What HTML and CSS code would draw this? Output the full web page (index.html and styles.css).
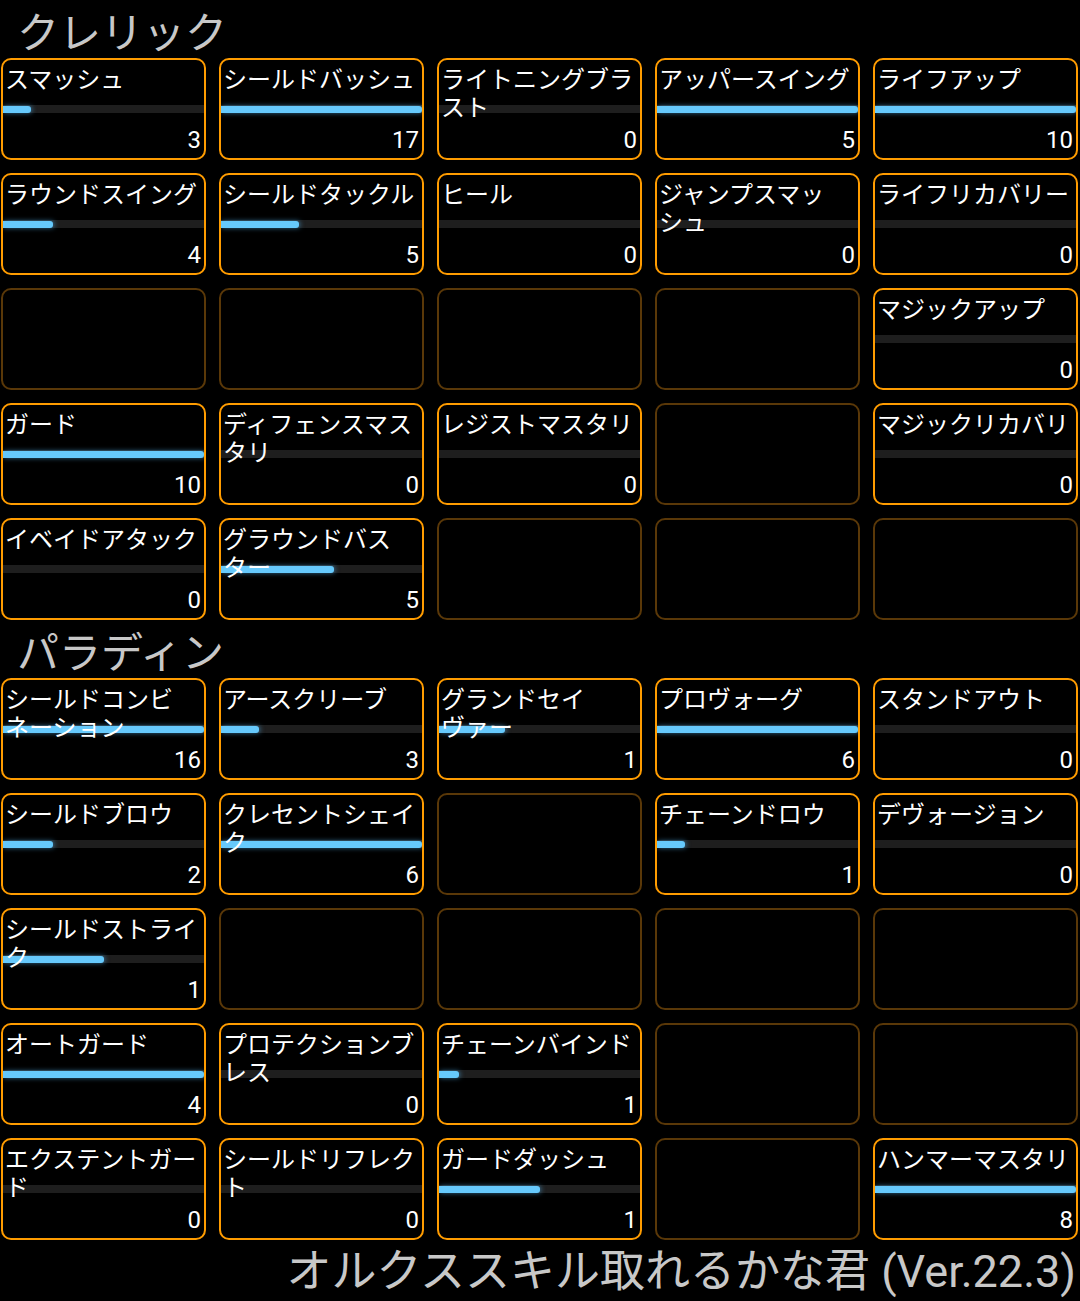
FILE: index.html
```html
<!DOCTYPE html>
<html lang="ja">
<head>
    <meta charset="UTF-8">
    <meta name="viewport" content="width=device-width, initial-scale=1.0">
    <title>オルクススキル取れるかな君</title>
    <link rel="stylesheet" href="styles.css">
</head>
<body>
  <div class="screen">

    <div class="class-title">クレリック</div>
    <div class="skill-grid">
      <div class="skill"><div class="bar"><div class="fill" style="width:14%"></div></div><div class="skill-name">スマッシュ</div><div class="skill-lv">3</div></div>
      <div class="skill"><div class="bar"><div class="fill" style="width:100%"></div></div><div class="skill-name">シールドバッシュ</div><div class="skill-lv">17</div></div>
      <div class="skill"><div class="bar"></div><div class="skill-name">ライトニングブラスト</div><div class="skill-lv">0</div></div>
      <div class="skill"><div class="bar"><div class="fill" style="width:100%"></div></div><div class="skill-name">アッパースイング</div><div class="skill-lv">5</div></div>
      <div class="skill"><div class="bar"><div class="fill" style="width:100%"></div></div><div class="skill-name">ライフアップ</div><div class="skill-lv">10</div></div>

      <div class="skill"><div class="bar"><div class="fill" style="width:25%"></div></div><div class="skill-name">ラウンドスイング</div><div class="skill-lv">4</div></div>
      <div class="skill"><div class="bar"><div class="fill" style="width:39%"></div></div><div class="skill-name">シールドタックル</div><div class="skill-lv">5</div></div>
      <div class="skill"><div class="bar"></div><div class="skill-name">ヒール</div><div class="skill-lv">0</div></div>
      <div class="skill"><div class="bar"></div><div class="skill-name">ジャンプスマッシュ</div><div class="skill-lv">0</div></div>
      <div class="skill"><div class="bar"></div><div class="skill-name">ライフリカバリー</div><div class="skill-lv">0</div></div>

      <div class="skill empty"></div>
      <div class="skill empty"></div>
      <div class="skill empty"></div>
      <div class="skill empty"></div>
      <div class="skill"><div class="bar"></div><div class="skill-name">マジックアップ</div><div class="skill-lv">0</div></div>

      <div class="skill"><div class="bar"><div class="fill" style="width:100%"></div></div><div class="skill-name">ガード</div><div class="skill-lv">10</div></div>
      <div class="skill"><div class="bar"></div><div class="skill-name">ディフェンスマスタリ</div><div class="skill-lv">0</div></div>
      <div class="skill"><div class="bar"></div><div class="skill-name">レジストマスタリ</div><div class="skill-lv">0</div></div>
      <div class="skill empty"></div>
      <div class="skill"><div class="bar"></div><div class="skill-name">マジックリカバリ</div><div class="skill-lv">0</div></div>

      <div class="skill"><div class="bar"></div><div class="skill-name">イベイドアタック</div><div class="skill-lv">0</div></div>
      <div class="skill"><div class="bar"><div class="fill" style="width:56%"></div></div><div class="skill-name">グラウンドバスター</div><div class="skill-lv">5</div></div>
      <div class="skill empty"></div>
      <div class="skill empty"></div>
      <div class="skill empty"></div>
    </div>

    <div class="class-title">パラディン</div>
    <div class="skill-grid">
      <div class="skill"><div class="bar"><div class="fill" style="width:100%"></div></div><div class="skill-name">シールドコンビネーション</div><div class="skill-lv">16</div></div>
      <div class="skill"><div class="bar"><div class="fill" style="width:19%"></div></div><div class="skill-name">アースクリーブ</div><div class="skill-lv">3</div></div>
      <div class="skill"><div class="bar"><div class="fill" style="width:33%"></div></div><div class="skill-name">グランドセイヴァー</div><div class="skill-lv">1</div></div>
      <div class="skill"><div class="bar"><div class="fill" style="width:100%"></div></div><div class="skill-name">プロヴォーグ</div><div class="skill-lv">6</div></div>
      <div class="skill"><div class="bar"></div><div class="skill-name">スタンドアウト</div><div class="skill-lv">0</div></div>

      <div class="skill"><div class="bar"><div class="fill" style="width:25%"></div></div><div class="skill-name">シールドブロウ</div><div class="skill-lv">2</div></div>
      <div class="skill"><div class="bar"><div class="fill" style="width:100%"></div></div><div class="skill-name">クレセントシェイク</div><div class="skill-lv">6</div></div>
      <div class="skill empty"></div>
      <div class="skill"><div class="bar"><div class="fill" style="width:14%"></div></div><div class="skill-name">チェーンドロウ</div><div class="skill-lv">1</div></div>
      <div class="skill"><div class="bar"></div><div class="skill-name">デヴォージョン</div><div class="skill-lv">0</div></div>

      <div class="skill"><div class="bar"><div class="fill" style="width:50%"></div></div><div class="skill-name">シールドストライク</div><div class="skill-lv">1</div></div>
      <div class="skill empty"></div>
      <div class="skill empty"></div>
      <div class="skill empty"></div>
      <div class="skill empty"></div>

      <div class="skill"><div class="bar"><div class="fill" style="width:100%"></div></div><div class="skill-name">オートガード</div><div class="skill-lv">4</div></div>
      <div class="skill"><div class="bar"></div><div class="skill-name">プロテクションブレス</div><div class="skill-lv">0</div></div>
      <div class="skill"><div class="bar"><div class="fill" style="width:10%"></div></div><div class="skill-name">チェーンバインド</div><div class="skill-lv">1</div></div>
      <div class="skill empty"></div>
      <div class="skill empty"></div>

      <div class="skill"><div class="bar"></div><div class="skill-name">エクステントガード</div><div class="skill-lv">0</div></div>
      <div class="skill"><div class="bar"></div><div class="skill-name">シールドリフレクト</div><div class="skill-lv">0</div></div>
      <div class="skill"><div class="bar"><div class="fill" style="width:50%"></div></div><div class="skill-name">ガードダッシュ</div><div class="skill-lv">1</div></div>
      <div class="skill empty"></div>
      <div class="skill"><div class="bar"><div class="fill" style="width:100%"></div></div><div class="skill-name">ハンマーマスタリ</div><div class="skill-lv">8</div></div>
    </div>

    <div class="footer">オルクススキル取れるかな君 (Ver.22.3)</div>
  </div>
</body>
</html>
```

FILE: styles.css
```css
body {
    margin: 0;
    background-color: #000;
    font-family: Roboto, "Noto Sans CJK JP", sans-serif;
}

.screen {
    width: 1080px;
    height: 1301px;
    overflow: hidden;
}

.class-title {
    height: 58px;
    padding-left: 17px;
    line-height: 60px;
    font-size: 42px;
    color: #c8c8c8;
    font-family: "Noto Sans CJK JP", sans-serif;
}

.skill-grid {
    display: grid;
    grid-template-columns: repeat(5, 205px);
    grid-auto-rows: 102px;
    gap: 13px;
    padding-left: 1px;
}

.skill {
    display: grid;
    grid-template-columns: 100%;
    grid-template-rows: 100%;
    border: 2px solid #ff9c00;
    border-radius: 10px;
    overflow: hidden;
    color: #fff;
}
.skill.empty {
    border-color: #5a3808;
}

.skill > * {
    grid-row: 1;
    grid-column: 1;
}

.skill-name {
    align-self: start;
    z-index: 1;
    padding: 4px 0 0 2px;
    font-family: "Noto Sans CJK JP", sans-serif;
    font-size: 24px;
    line-height: 28px;
    line-break: strict;
}

.bar {
    align-self: start;
    margin-top: 45px;
    height: 8px;
    background-color: #1e1e1e;
}
.fill {
    height: 7px;
    margin-top: 1px;
    background-color: #66c9fc;
    border-radius: 0 3px 3px 0;
    box-shadow: 1px 0 5px rgba(90, 190, 255, 0.55);
}

.skill-lv {
    align-self: end;
    justify-self: end;
    padding: 0 3px 4px 0;
    font-size: 24px;
    line-height: 28px;
}

.footer {
    box-sizing: border-box;
    height: 61px;
    padding: 4px 4px 0 0;
    line-height: 56px;
    text-align: right;
    font-size: 45px;
    color: #c8c8c8;
    font-family: Roboto, "Noto Sans CJK JP", sans-serif;
    white-space: nowrap;
}
```
